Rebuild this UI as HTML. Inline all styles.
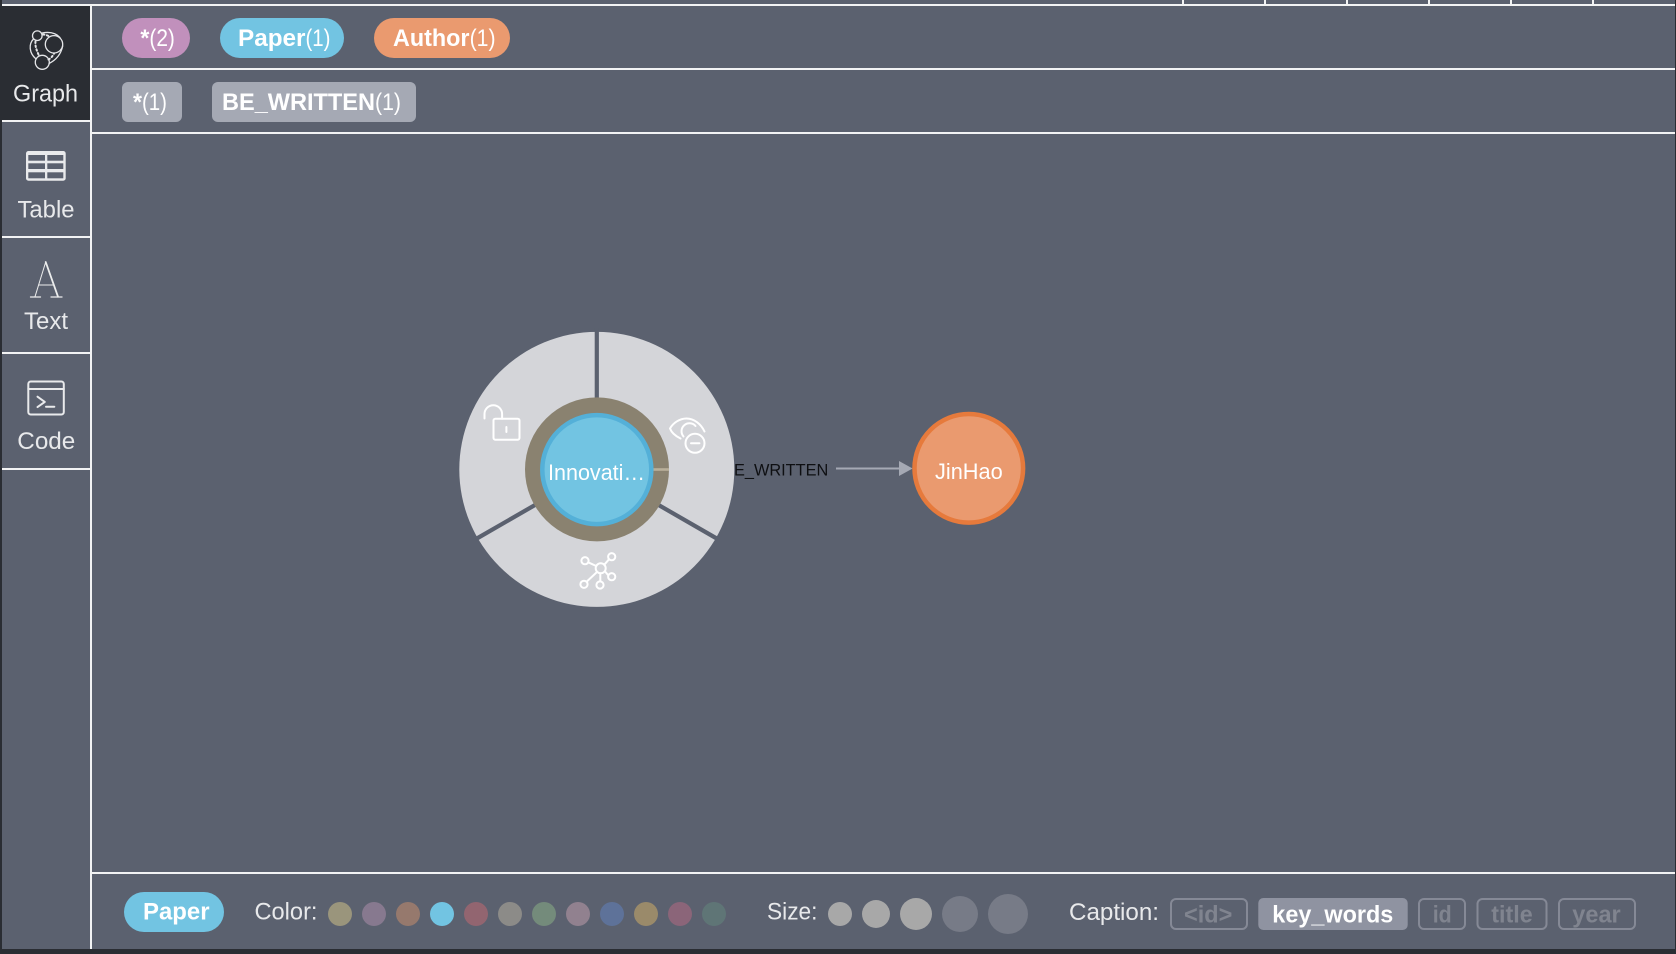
<!DOCTYPE html>
<html><head><meta charset="utf-8"><style>
html,body{margin:0;padding:0;background:#5b616f;width:1676px;height:954px;overflow:hidden}
svg{display:block;position:absolute;left:0;top:0}
text{font-family:"Liberation Sans",sans-serif;font-size:24px;fill:#fff}
.b{font-weight:700}
.n{fill:#e8e9eb}
.g{fill:#80848f;font-weight:700}
.i{fill:none;stroke:#fff;stroke-width:2;stroke-linecap:round;stroke-linejoin:round}
.s{fill:none;stroke:#e4e5e8;stroke-width:1.3;stroke-linecap:round;stroke-linejoin:round}
</style></head><body>
<svg width="1676" height="954" viewBox="0 0 1676 954" xmlns="http://www.w3.org/2000/svg">
<rect width="1676" height="954" fill="#5b616f"/>
<!-- frame -->
<rect x="0" y="0" width="2" height="954" fill="#2a2d33"/>
<rect x="1675" y="0" width="1" height="954" fill="#2a2d33"/>
<rect x="0" y="949" width="1676" height="5" fill="#2a2d33"/>
<rect x="2" y="4" width="1673" height="2" fill="#f2f3f4"/>
<g fill="#f2f3f4"><rect x="1182" y="0" width="2" height="4"/><rect x="1264" y="0" width="2" height="4"/><rect x="1346" y="0" width="2" height="4"/><rect x="1428" y="0" width="2" height="4"/><rect x="1510" y="0" width="2" height="4"/><rect x="1592" y="0" width="2" height="4"/></g>
<!-- sidebar -->
<rect x="2" y="6" width="88" height="114" fill="#2a2d33"/>
<rect x="90" y="6" width="2" height="943" fill="#f2f3f4"/>
<g fill="#f2f3f4"><rect x="2" y="120" width="88" height="2"/><rect x="2" y="236" width="88" height="2"/><rect x="2" y="352" width="88" height="2"/><rect x="2" y="468" width="88" height="2"/>
<rect x="92" y="68" width="1583" height="2"/><rect x="92" y="132" width="1583" height="2"/><rect x="92" y="872" width="1583" height="2"/></g>
<!-- graph icon -->
<g class="s">
<circle cx="37.3" cy="35.7" r="4.8"/><circle cx="54" cy="44.3" r="8.7"/><circle cx="42.3" cy="62.3" r="7"/>
<path d="M33.5 39C28.500 44 29 53 36 59M49 63.500C56 60 61 54 62.700 46M42 33C50 31.500 56 33 60 37.500"/>
<path d="M35.500 41.500C35 46 36.500 50 38.500 54.500M43 34.500C44.500 34.500 46.500 35 48.500 36M48.500 59.500C50.500 58.500 52.500 56.500 54 53.500" stroke-width="2" stroke-dasharray="1.500 2.500"/>
</g>
<text class="n" x="13" y="101.500" textLength="65" lengthAdjust="spacingAndGlyphs">Graph</text>
<!-- table icon -->
<rect x="26" y="151" width="39.700" height="29.700" rx="2.500" fill="#e9eaec"/>
<g fill="#5b616f"><rect x="28.300" y="155" width="16.700" height="5.700"/><rect x="47.300" y="155" width="16" height="5.700"/><rect x="28.300" y="163.300" width="16.700" height="5.700"/><rect x="47.300" y="163.300" width="16" height="5.700"/><rect x="28.300" y="172.300" width="16.700" height="6"/><rect x="47.300" y="172.300" width="16" height="6"/></g>
<text class="n" x="17.500" y="217.500" textLength="57" lengthAdjust="spacingAndGlyphs">Table</text>
<!-- Text icon -->
<g fill="none" stroke="#eceded" stroke-linecap="round">
<path d="M45.700 262L35 296.700" stroke-width="1"/><path d="M45.700 262L58 296.700" stroke-width="1.800"/><path d="M38.700 285H53.500" stroke-width="1"/><path d="M30.500 297H40.500M51 297H62" stroke-width="1.300"/>
</g>
<text class="n" x="24" y="329" textLength="44" lengthAdjust="spacingAndGlyphs">Text</text>
<!-- code icon -->
<g fill="none" stroke="#e9eaec" stroke-width="2" stroke-linejoin="round" stroke-linecap="round"><rect x="28.300" y="381.500" width="35.500" height="33" rx="2.500"/><path d="M28.300 389H63.800"/><path d="M37.500 396.700l7.300 5.200-7.300 5.200"/><path d="M46 406.700h8.300"/></g>
<text class="n" x="17.300" y="449" textLength="58" lengthAdjust="spacingAndGlyphs">Code</text>
<!-- label pills -->
<rect x="122" y="18" width="68" height="40" rx="20" fill="#c190bc"/>
<rect x="220" y="18" width="124" height="40" rx="20" fill="#72c4e2"/>
<rect x="374" y="18" width="136" height="40" rx="20" fill="#ea9a6f"/>
<text class="b" x="140.400" y="46" textLength="9" lengthAdjust="spacingAndGlyphs">*</text><text x="149.400" y="46" textLength="25.500" lengthAdjust="spacingAndGlyphs">(2)</text>
<text class="b" x="238" y="46" textLength="67.500" lengthAdjust="spacingAndGlyphs">Paper</text><text x="305.500" y="46" textLength="25" lengthAdjust="spacingAndGlyphs">(1)</text>
<text class="b" x="393" y="46" textLength="76.500" lengthAdjust="spacingAndGlyphs">Author</text><text x="469.600" y="46" textLength="26" lengthAdjust="spacingAndGlyphs">(1)</text>
<!-- rel pills -->
<rect x="122" y="82" width="60" height="40" rx="6" fill="#a5a9b4"/>
<rect x="212" y="82" width="204" height="40" rx="6" fill="#a5a9b4"/>
<text class="b" x="133" y="110" textLength="9" lengthAdjust="spacingAndGlyphs">*</text><text x="142" y="110" textLength="25" lengthAdjust="spacingAndGlyphs">(1)</text>
<text class="b" x="222" y="110" textLength="153" lengthAdjust="spacingAndGlyphs">BE_WRITTEN</text><text x="375" y="110" textLength="26" lengthAdjust="spacingAndGlyphs">(1)</text>
<!-- node with ring menu -->
<circle cx="596.800" cy="469.400" r="137.500" fill="#d4d5d9"/>
<g stroke="#5b616f" stroke-width="4.200"><path d="M596.800 469.400V328"/><path d="M596.800 469.400L476 539"/><path d="M596.800 469.400L717.600 539"/></g>
<circle cx="597" cy="469.400" r="72" fill="#8a8270"/>
<rect x="653" y="468.200" width="16" height="2.600" fill="#b9b09a"/>
<circle cx="596.800" cy="469.600" r="54.500" fill="#72c4e2" stroke="#54b0d8" stroke-width="4.500"/>
<text x="548" y="480" style="font-size:22px" textLength="97" lengthAdjust="spacingAndGlyphs">Innovati…</text>
<!-- lock -->
<g class="i"><path d="M484.500 418.500V414a8.800 8.800 0 0 1 17.600 0v4.700"/><rect x="493.500" y="418.700" width="26" height="21" rx="1.800"/><path d="M506.400 427v5"/></g>
<!-- eye minus -->
<g class="i"><path d="M680.500 438.500C675.500 436 671.500 432.500 670 428.500C673 423 679.500 418.500 686.500 418.500C694 418.500 701 424 704.500 431.500"/><path d="M695.500 426A7.500 7.500 0 0 0 683.500 436.500"/><circle cx="695" cy="443.300" r="9.500"/><path d="M691 443.300h8.400"/></g>
<!-- network -->
<g class="i"><circle cx="600.700" cy="568.300" r="5"/><circle cx="585" cy="560.700" r="3.600"/><circle cx="611.700" cy="556.700" r="3.600"/><circle cx="611.700" cy="576.700" r="3.600"/><circle cx="584" cy="584.300" r="3.600"/><circle cx="600" cy="585" r="3.600"/><path d="M588.200 562.300L596.200 566M609 559.300L604.300 564.700M608.300 575.300L605.500 572M586.700 581.600L597 572M600.300 581.400V573.300"/></g>
<!-- edge -->
<text x="734" y="475.500" style="font-size:16.500px;fill:#0e0f12" textLength="94.300" lengthAdjust="spacingAndGlyphs">E_WRITTEN</text>
<rect x="836" y="467.500" width="64" height="2" fill="#a5a9b4"/>
<path d="M899 461L912.600 468.500L899 476Z" fill="#a5a9b4"/>
<!-- Author node -->
<circle cx="968.800" cy="468.300" r="54.300" fill="#ea9a6f" stroke="#e67a3c" stroke-width="4.500"/>
<text x="935" y="479" style="font-size:22px" textLength="67.700" lengthAdjust="spacingAndGlyphs">JinHao</text>
<!-- bottom -->
<rect x="124" y="892" width="100" height="40" rx="20" fill="#72c4e2"/>
<text class="b" x="143" y="919.500" textLength="66.500" lengthAdjust="spacingAndGlyphs">Paper</text>
<text class="n" x="254.500" y="919.500" textLength="63" lengthAdjust="spacingAndGlyphs">Color:</text>
<circle cx="340" cy="914" r="12" fill="#9a957c"/><circle cx="374" cy="914" r="12" fill="#87798f"/><circle cx="408" cy="914" r="12" fill="#96796d"/><circle cx="442" cy="914" r="12" fill="#72c4e2"/><circle cx="476" cy="914" r="12" fill="#926570"/><circle cx="510" cy="914" r="12" fill="#8c8b88"/><circle cx="544" cy="914" r="12" fill="#748b7b"/><circle cx="578" cy="914" r="12" fill="#91818f"/><circle cx="612" cy="914" r="12" fill="#5e7299"/><circle cx="646" cy="914" r="12" fill="#9a8a6a"/><circle cx="680" cy="914" r="12" fill="#8b6579"/><circle cx="714" cy="914" r="12" fill="#5f7576"/>
<text class="n" x="767" y="919.500" textLength="50.500" lengthAdjust="spacingAndGlyphs">Size:</text>
<circle cx="840" cy="914" r="12" fill="#a8a8a8"/><circle cx="876" cy="914" r="14" fill="#a8a8a8"/><circle cx="916" cy="914" r="16" fill="#a8a8a8"/><circle cx="960" cy="914" r="18" fill="#777b87"/><circle cx="1008" cy="914" r="20" fill="#777b87"/>
<text class="n" x="1069" y="920" textLength="90" lengthAdjust="spacingAndGlyphs">Caption:</text>
<g fill="none" stroke="#858996" stroke-width="2"><rect x="1171" y="899" width="76" height="30" rx="5"/><rect x="1419" y="899" width="46" height="30" rx="5"/><rect x="1477.500" y="899" width="69" height="30" rx="5"/><rect x="1559" y="899" width="76" height="30" rx="5"/></g>
<rect x="1258.300" y="898" width="149.400" height="32" rx="5" fill="#8f93a1"/>
<text class="g" x="1184" y="922.300" textLength="48.300" lengthAdjust="spacingAndGlyphs">&lt;id&gt;</text>
<text class="b" x="1272.300" y="922.300" textLength="121" lengthAdjust="spacingAndGlyphs">key_words</text>
<text class="g" x="1432.700" y="922.300" textLength="19" lengthAdjust="spacingAndGlyphs">id</text>
<text class="g" x="1491.300" y="922.300" textLength="41.400" lengthAdjust="spacingAndGlyphs">title</text>
<text class="g" x="1572.300" y="922.300" textLength="48.400" lengthAdjust="spacingAndGlyphs">year</text>
</svg>
</body></html>
